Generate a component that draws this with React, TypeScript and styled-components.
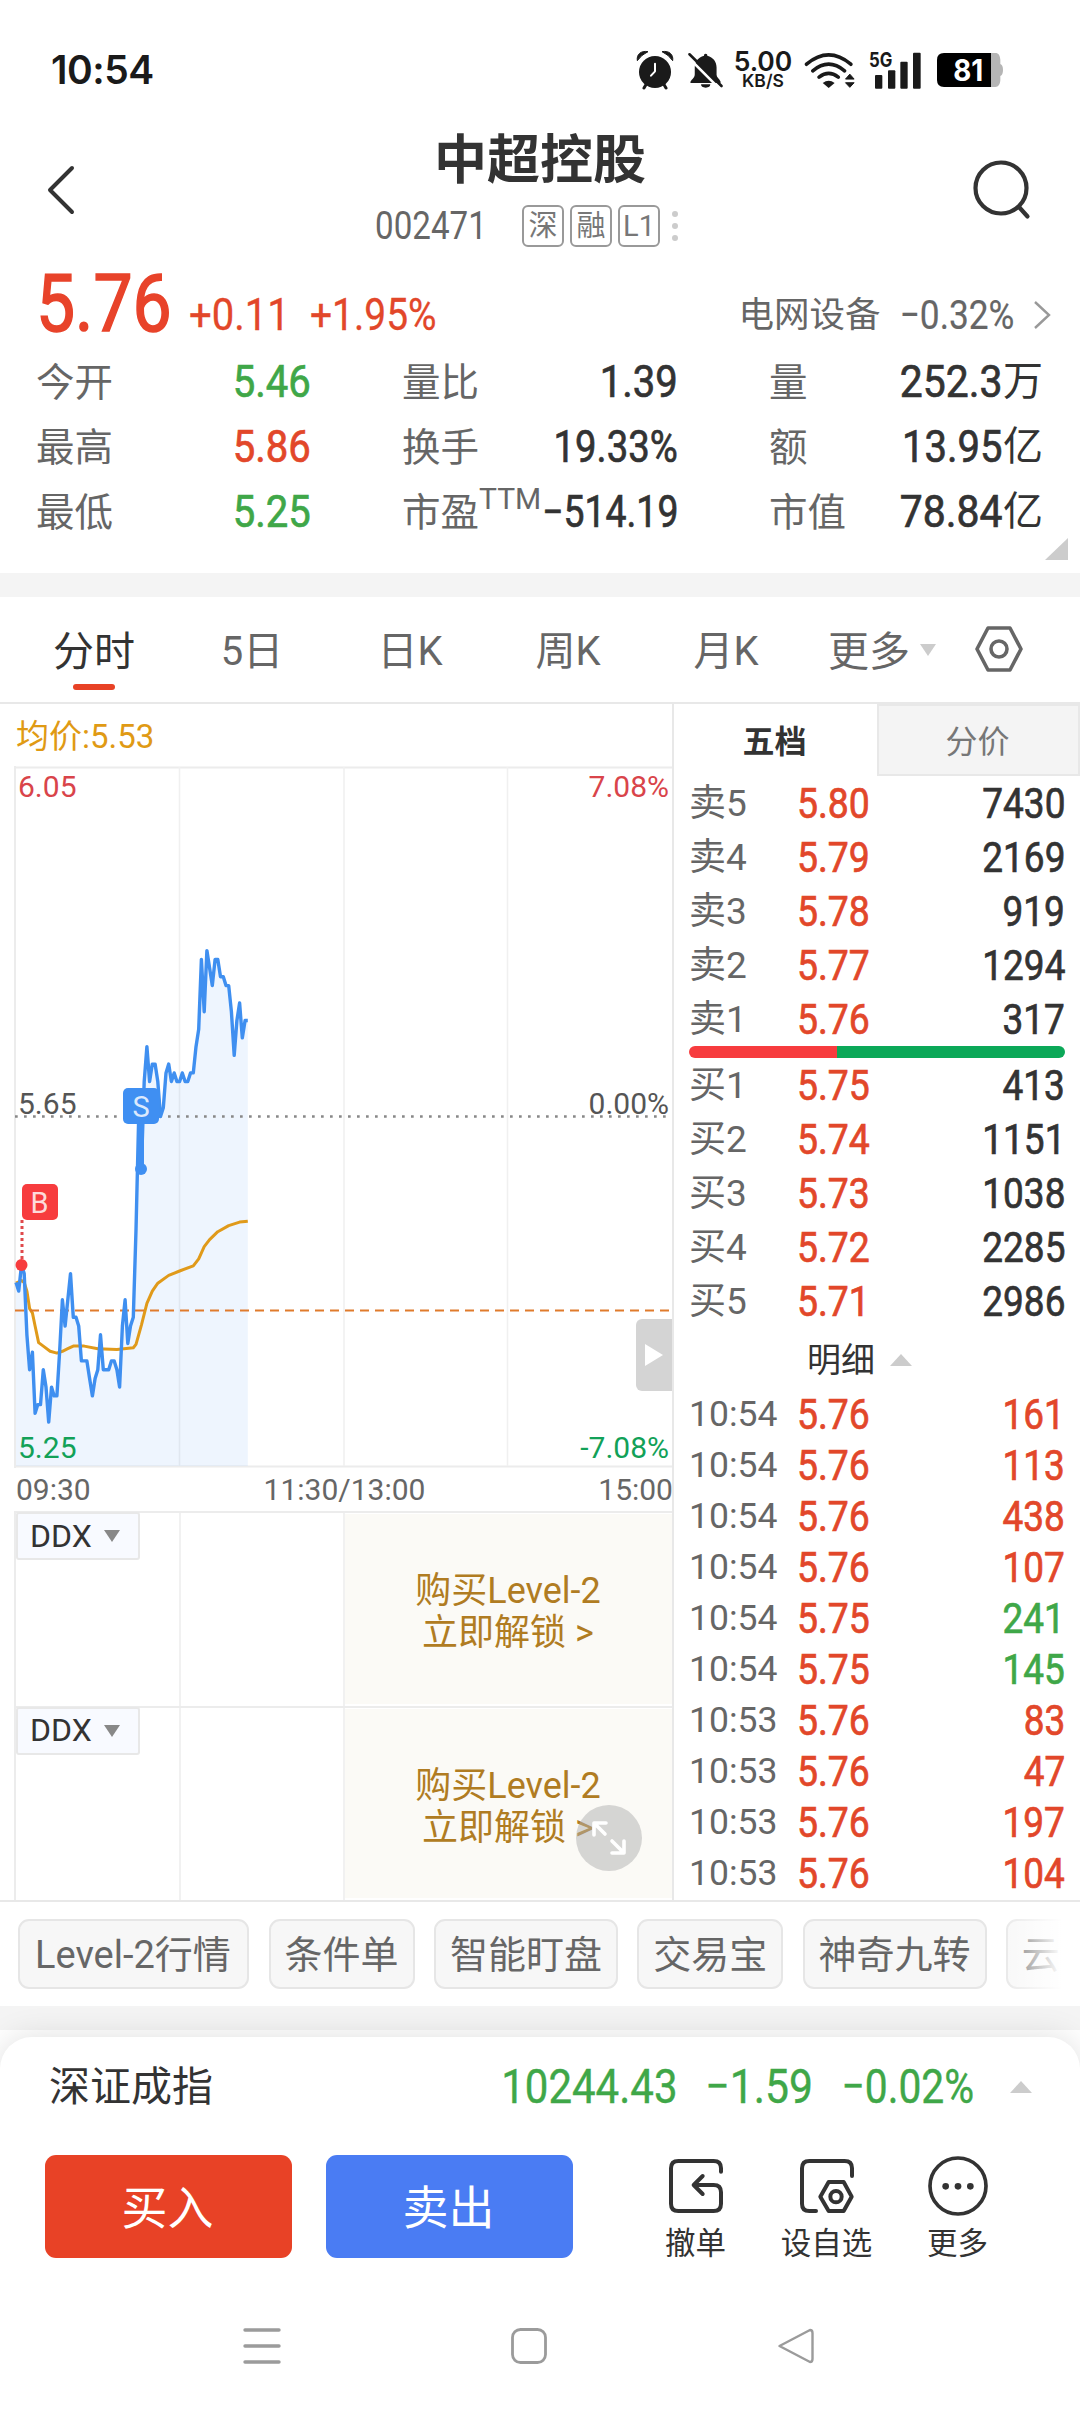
import React from "react";
import styled, { createGlobalStyle } from "styled-components";

const RED = "#e2472a";
const GREEN = "#3fa748";
const INK = "#333";
const GREY = "#666";
const LINE = "#e8e8e8";

const GlobalStyle = createGlobalStyle`
  * { box-sizing: border-box; }
  body {
    margin: 0;
    background: #fff;
    font-family: Roboto, "Noto Sans CJK SC", sans-serif;
    color: ${INK};
  }
`;

const Screen = styled.div`
  width: 1080px;
  height: 2412px;
  display: flex;
  flex-direction: column;
  background: #fff;
  overflow: hidden;
`;

/* Narrow figures used for every price and volume; $bold thickens the strokes */
const Num = styled.span<{
  $size?: number;
  $color?: string;
  $bold?: number;
  $narrow?: number;
  $from?: "left" | "right";
}>`
  display: inline-block;
  white-space: nowrap;
  font-size: ${(p) => p.$size ?? 43}px;
  font-weight: 400;
  color: ${(p) => p.$color ?? INK};
  -webkit-text-stroke: ${(p) => p.$bold ?? 0.7}px currentColor;
  transform: scaleX(${(p) => p.$narrow ?? 0.9});
  transform-origin: ${(p) => p.$from ?? "right"} center;
`;

/* ---------- status bar ---------- */

const StatusBar = styled.div`
  height: 128px;
  padding: 12px 77px 0 51px;
  display: flex;
  justify-content: space-between;
  align-items: center;
  font-family: Inter, sans-serif;
  color: #1a1a1a;
`;

const Clock = styled.span`
  margin-top: -2px;
  font-size: 39px;
  font-weight: 600;
  letter-spacing: -0.5px;
`;

const StatusIcons = styled.div`
  display: flex;
  align-items: center;
`;

const Speed = styled.div`
  width: 60px;
  margin: 1px 10px 0 9px;
  display: flex;
  flex-direction: column;
  align-items: center;
  font-weight: 600;
`;

const SpeedValue = styled.span`
  font-size: 26.5px;
  line-height: 21px;
`;

const SpeedUnit = styled.span`
  font-size: 17.5px;
  line-height: 18px;
`;

const SignalIcon = styled.svg`
  margin: -5px 0 0 12px;
`;

const BellIcon = styled.svg`
  margin-left: 13px;
`;

const BatteryIcon = styled.svg`
  margin-left: 15px;
`;

/* ---------- header ---------- */

const Header = styled.header`
  height: 124px;
  padding: 0 49px 0 44px;
  display: grid;
  grid-template-columns: 331px 330px 1fr;
  align-items: center;
`;

const SearchSlot = styled.div`
  display: flex;
  justify-content: flex-end;
`;

const Title = styled.h1`
  margin: 0;
  height: 66px;
  line-height: 67px;
  text-align: center;
  font-size: 53px;
  font-weight: 700;
`;

const CodeRow = styled.div`
  height: 58px;
  padding-top: 6px;
  display: flex;
  align-items: center;
`;

const CodeSlot = styled.div`
  width: 147px;
`;

const Badge = styled.span`
  width: 42px;
  height: 42px;
  margin-right: 6px;
  border: 2px solid #999;
  border-radius: 6px;
  display: flex;
  align-items: center;
  justify-content: center;
  font-size: 29px;
  line-height: 38px;
  color: #777;
`;

const Dots = styled.div`
  margin-left: 6px;
  display: flex;
  flex-direction: column;
  gap: 6px;
`;

const Dot = styled.i`
  width: 6px;
  height: 6px;
  border-radius: 50%;
  background: #ccc;
`;

/* ---------- quote ---------- */

const Quote = styled.section`
  height: 321px;
  padding-top: 12px;
`;

const PriceRow = styled.div`
  height: 85px;
  padding: 0 28px 0 36px;
  display: flex;
  align-items: flex-start;
`;

const BigPrice = styled.div`
  width: 153px;
  line-height: 80px;
`;

const Change = styled.div<{ $w?: number }>`
  width: ${(p) => (p.$w ? `${p.$w}px` : "auto")};
  padding-top: 21px;
  line-height: 60px;
`;

const Sector = styled.div`
  margin-left: auto;
  padding-top: 21px;
  display: flex;
  align-items: center;
  font-size: 35.5px;
  line-height: 60px;
  color: ${GREY};
`;

const SectorArrow = styled.svg`
  margin-left: 18px;
`;

const Stats = styled.div`
  padding: 0 37px 0 36px;
  display: grid;
  grid-template-columns: 275px 276px 274px;
  justify-content: space-between;
  grid-auto-rows: 65px;
`;

const Stat = styled.div`
  display: flex;
  justify-content: space-between;
  align-items: center;
  line-height: 60px;
`;

const StatLabel = styled.span`
  width: 0;
  padding-top: 2px;
  font-size: 38.5px;
  color: ${GREY};
  white-space: nowrap;
`;

const Raised = styled.span`
  display: inline-block;
  font-size: 30px;
  line-height: 20px;
  vertical-align: 17px;
`;

const StatValue = styled.span`
  display: flex;
  align-items: center;
  font-size: 40px;
`;

const Corner = styled.div`
  width: 0;
  height: 0;
  margin: -6px 12px 0 auto;
  border-left: 23px solid transparent;
  border-bottom: 22px solid #ccc;
`;

const Band = styled.div`
  flex: none;
  height: 24px;
  background: #f4f4f4;
`;

/* ---------- period tabs ---------- */

const PeriodTabs = styled.nav`
  height: 105px;
  padding-left: 15px;
  display: flex;
`;

const PeriodTab = styled.div<{ $active?: boolean }>`
  width: 158px;
  padding-top: 33px;
  display: flex;
  flex-direction: column;
  align-items: center;
  font-size: ${(p) => (p.$active ? 41 : 40)}px;
  line-height: 44px;
  color: ${(p) => (p.$active ? INK : GREY)};
`;

const Underline = styled.i`
  width: 42px;
  height: 6px;
  margin-top: 10px;
  border-radius: 3px;
  background: #e84226;
`;

const MoreTab = styled.div`
  width: 170px;
  padding: 33px 0 0 23px;
  display: flex;
  font-size: 41px;
  line-height: 44px;
  color: ${GREY};
`;

const Caret = styled.i<{ $w: number; $h: number; $up?: boolean; $color?: string }>`
  width: 0;
  height: 0;
  border-left: ${(p) => p.$w / 2}px solid transparent;
  border-right: ${(p) => p.$w / 2}px solid transparent;
  border-${(p) => (p.$up ? "bottom" : "top")}: ${(p) => p.$h}px solid ${(p) => p.$color ?? "#ccc"};
`;

const MoreCaret = styled(Caret)`
  margin: 14px 0 0 10px;
`;

const HexSlot = styled.div`
  padding-top: 28px;
`;

/* ---------- main area ---------- */

const Main = styled.main`
  height: 1200px;
  border-top: 2px solid ${LINE};
  border-bottom: 2px solid ${LINE};
  display: grid;
  grid-template-columns: 674px 406px;
`;

const ChartColumn = styled.section`
  position: relative;
  border-right: 2px solid ${LINE};
  display: flex;
  flex-direction: column;
`;

const Average = styled.div`
  height: 62px;
  padding: 12px 0 0 16px;
  font-size: 33px;
  line-height: 42px;
  color: #e09a14;
`;

const TimeAxis = styled.div`
  height: 43px;
  margin-right: -1px;
  padding-left: 16px;
  display: flex;
  justify-content: space-between;
  font-size: 30px;
  line-height: 43px;
  color: ${GREY};
`;

const SubPanel = styled.div`
  height: 194.5px;
  margin-left: 14px;
  border-top: 2px solid #ececec;
  border-left: 2px solid #ececec;
  display: grid;
  grid-template-columns: 164.500px 164.500px 327px;
`;

const SubCell = styled.div`
  border-right: 2px solid #f1f1f1;
`;

const IndicatorButton = styled.button`
  width: 124px;
  height: 48px;
  margin-top: -1px;
  padding: 0 0 0 12px;
  border: 2px solid ${LINE};
  border-radius: 3px;
  background: #f8faff;
  display: flex;
  align-items: center;
  gap: 12px;
  font: 400 32px/45px Roboto, sans-serif;
  color: ${INK};
`;

const Unlock = styled.div`
  margin: 1px 0 2px;
  padding: 56px 1px 0 0;
  background: #fbfaf6;
  text-align: center;
  font-size: 36px;
  line-height: 42px;
  color: #b07c22;
`;

const ExpandTab = styled.button`
  position: absolute;
  left: 636px;
  top: 615px;
  width: 36px;
  height: 72px;
  padding: 0;
  border: 0;
  border-radius: 6px 0 0 6px;
  background: #d4d4d4;
  display: flex;
  align-items: center;
  justify-content: center;
`;

const FullscreenButton = styled.button`
  position: absolute;
  left: 576px;
  top: 1101px;
  width: 66px;
  height: 66px;
  padding: 0;
  border: 0;
  border-radius: 50%;
  background: rgba(176, 176, 176, 0.5);
`;

/* ---------- order book ---------- */

const Book = styled.section`
  display: flex;
  flex-direction: column;
`;

const BookTabs = styled.div`
  height: 72px;
  display: grid;
  grid-template-columns: 203px 203px;
  grid-template-rows: 72px;
  text-align: center;
  font-size: 32px;
`;

const BookTab = styled.div<{ $active?: boolean }>`
  padding-right: 2px;
  line-height: ${(p) => (p.$active ? 76 : 73)}px;
  font-weight: ${(p) => (p.$active ? 700 : 400)};
  color: ${(p) => (p.$active ? INK : "#777")};
  background: ${(p) => (p.$active ? "#fff" : "#f4f4f4")};
  border: ${(p) => (p.$active ? "0" : `2px solid ${LINE}`)};
`;

const BookRow = styled.div<{ $h: number }>`
  height: ${(p) => p.$h}px;
  padding: 2px 15px 0 15px;
  display: grid;
  grid-template-columns: 108px 1fr auto;
  grid-template-rows: ${(p) => p.$h - 2}px;
  align-items: center;
  line-height: ${(p) => p.$h - 2}px;
`;

const Level = styled.span<{ $size: number }>`
  font-size: ${(p) => p.$size}px;
  color: ${GREY};
`;

const RatioBar = styled.div`
  height: 12px;
  margin: 0 15px;
  border-radius: 6px;
  background: linear-gradient(to right, #f73c3e 148px, #0ba858 148px);
`;

const DetailHead = styled.div`
  height: 60px;
  padding: 4px 0 0 133px;
  display: flex;
  align-items: center;
  gap: 15px;
  font-size: 34px;
  line-height: 56px;
`;

/* ---------- chips ---------- */

const Chips = styled.div`
  position: relative;
  height: 104px;
  padding: 17px 0 0 18px;
  display: flex;
  gap: 19.3px;
  width: 1062px;
  overflow: hidden;
`;

const Chip = styled.span<{ $pad?: string }>`
  flex: none;
  height: 70px;
  padding: ${(p) => p.$pad ?? "0 14px"};
  border: 2px solid #e6e6e6;
  border-radius: 11px;
  background: #f7f7f7;
  font-size: 38px;
  line-height: 69px;
  color: ${GREY};
  white-space: nowrap;
`;

const Fade = styled.div`
  position: absolute;
  right: 0;
  top: 0;
  width: 66px;
  height: 100%;
  background: linear-gradient(to right, rgba(255, 255, 255, 0), #fff);
`;

/* ---------- bottom sheet ---------- */

const Sheet = styled.footer`
  margin-top: 7px;
  height: 221px;
  flex: none;
  border-radius: 32px 32px 0 0;
  background: #fff;
  box-shadow: 0 0 32px rgba(0, 0, 0, 0.13);
  clip-path: inset(-40px 0 0 0);
`;

const IndexRow = styled.div`
  height: 98px;
  padding: 1px 49px 0 49px;
  display: grid;
  grid-template-columns: 1fr 136px 161px 57.5px;
  align-items: center;
  justify-items: end;
  line-height: 96px;
`;

const IndexName = styled.span`
  width: 628px;
  display: flex;
  justify-content: space-between;
  font-size: 41px;
`;

const Actions = styled.div`
  padding: 20px 0 0 45px;
  display: flex;
`;

const TradeButton = styled.button<{ $bg: string }>`
  width: 247px;
  height: 103px;
  margin-right: 34px;
  padding: 4px 2px 0 0;
  border: 0;
  border-radius: 11px;
  background: ${(p) => p.$bg};
  color: #fff;
  font: 400 46px/99px Roboto, "Noto Sans CJK SC", sans-serif;
`;

const Tools = styled.div`
  margin-left: 23px;
  display: flex;
`;

const Tool = styled.div`
  width: 131px;
  display: flex;
  flex-direction: column;
  align-items: center;
  font-size: 30.5px;
  line-height: 56px;
`;

const ToolIcon = styled.svg`
  margin-top: 1px;
`;

const SystemNav = styled.nav`
  flex: 1;
  padding: 22px 265px 0 243px;
  display: flex;
  justify-content: space-between;
  align-items: center;
`;

/* ---------- data ---------- */

const PRICES = [
  5.46, 5.45, 5.48, 5.47, 5.4, 5.36, 5.38, 5.31, 5.32, 5.32, 5.36, 5.34, 5.3, 5.34, 5.33, 5.33, 5.38,
  5.44, 5.41, 5.44, 5.47, 5.42, 5.42, 5.41, 5.37, 5.37, 5.37, 5.35, 5.33, 5.35, 5.36, 5.4, 5.36, 5.36,
  5.36, 5.37, 5.37, 5.36, 5.34, 5.41, 5.44, 5.39, 5.41, 5.42, 5.52, 5.65, 5.59, 5.69, 5.73, 5.69, 5.71,
  5.71, 5.69, 5.65, 5.66, 5.7, 5.71, 5.69, 5.7, 5.69, 5.69, 5.7, 5.69, 5.69, 5.7, 5.7, 5.73, 5.75, 5.83,
  5.77, 5.84, 5.82, 5.8, 5.83, 5.83, 5.81, 5.81, 5.8, 5.8, 5.77, 5.72, 5.76, 5.78, 5.74, 5.76, 5.76,
];

const AVERAGES: [number, number][] = [
  [0, 5.459], [2, 5.462], [3, 5.46], [4, 5.45], [5, 5.43], [6, 5.425], [7, 5.41], [8.3, 5.391], [10, 5.387],
  [12.5, 5.381], [15, 5.379], [17, 5.381], [19, 5.384], [21, 5.387], [25, 5.387], [30, 5.384], [37, 5.383],
  [43, 5.385], [44, 5.389], [46, 5.411], [48, 5.436], [50, 5.45], [52, 5.459], [56, 5.468], [60, 5.473],
  [65, 5.479], [67, 5.487], [69, 5.501], [71, 5.509], [74, 5.518], [78, 5.525], [82, 5.529], [85, 5.53],
];

const px = (minute: number) => 16 + minute * 2.727;
const py = (price: number) => 350.5 - (price - 5.65) * 873;
const toPath = (pts: [number, number][]) =>
  pts.map(([m, v], i) => `${i ? "L" : "M"}${px(m).toFixed(1)} ${py(v).toFixed(1)}`).join("");
const pricePath = toPath(PRICES.map((v, i) => [i, v] as [number, number]));

const STATS = [
  ["今开", "5.46", GREEN, "", 0.91],
  ["量比", "1.39", INK, "", 0.91],
  ["量", "252.3", INK, "万", 0.93],
  ["最高", "5.86", RED, "", 0.91],
  ["换手", "19.33%", INK, "", 0.87],
  ["额", "13.95", INK, "亿", 0.91],
  ["最低", "5.25", GREEN, "", 0.91],
  ["市盈", "−514.19", INK, "", 0.85],
  ["市值", "78.84", INK, "亿", 0.93],
] as const;

const SELLS = [["卖5", "5.80", "7430"], ["卖4", "5.79", "2169"], ["卖3", "5.78", "919"], ["卖2", "5.77", "1294"], ["卖1", "5.76", "317"]];
const BUYS = [["买1", "5.75", "413"], ["买2", "5.74", "1151"], ["买3", "5.73", "1038"], ["买4", "5.72", "2285"], ["买5", "5.71", "2986"]];
const TICKS = [
  ["10:54", "5.76", "161", RED], ["10:54", "5.76", "113", RED], ["10:54", "5.76", "438", RED],
  ["10:54", "5.76", "107", RED], ["10:54", "5.75", "241", GREEN], ["10:54", "5.75", "145", GREEN],
  ["10:53", "5.76", "83", RED], ["10:53", "5.76", "47", RED], ["10:53", "5.76", "197", RED], ["10:53", "5.76", "104", RED],
];

/* ---------- pieces ---------- */

function StatusIconSet() {
  return (
    <StatusIcons>
      <svg width="38" height="40" viewBox="46 60 114 120" fill="none">
        <circle cx="103" cy="126" r="48" fill="#1a1a1a" />
        <path d="M50 92C47 74 60 61 82 65Q62 74 50 92ZM156 92C159 74 146 61 124 65Q144 74 156 92Z" fill="#1a1a1a" stroke="#1a1a1a" strokeWidth="3" strokeLinejoin="round" />
        <path d="M77 162L70 174M129 162L136 174" stroke="#1a1a1a" strokeWidth="9" strokeLinecap="round" />
        <path d="M103 101V124L91 137" stroke="#fff" strokeWidth="6" strokeLinecap="round" strokeLinejoin="round" />
      </svg>
      <BellIcon width="37" height="38" viewBox="202 60 111 115" fill="none">
        <path d="M258 68c4 0 5 3 5 6 18 5 28 18 28 36v22c0 7 8 12 12 20v5H212v-3c0-6 13-12 13-24v-20c0-18 10-31 28-36 0-3 1-6 5-6z" fill="#1a1a1a" />
        <path d="M244 161h28a14 10 0 0 1-28 0z" fill="#1a1a1a" />
        <path d="M200 74L302 176" stroke="#fff" strokeWidth="8" />
        <path d="M209 70L306 166" stroke="#1a1a1a" strokeWidth="8" strokeLinecap="round" />
      </BellIcon>
      <Speed>
        <SpeedValue>5.00</SpeedValue>
        <SpeedUnit>KB/S</SpeedUnit>
      </Speed>
      <svg width="53" height="38" viewBox="550 60 159 115" fill="none">
        <path d="M560 100Q627 44 694 100M579 120Q627 80 675 120M598 139Q627 117 656 139" stroke="#1a1a1a" strokeWidth="11" strokeLinecap="round" />
        <path d="M627 172L609 157Q627 143 645 157Z" fill="#1a1a1a" />
        <path d="M678 145L691 130L704 145ZM678 156H704L691 170Z" fill="#1a1a1a" stroke="#1a1a1a" strokeWidth="3" strokeLinejoin="round" />
      </svg>
      <SignalIcon width="54" height="43" viewBox="744 46 162 129">
        <g fill="#1a1a1a">
          <rect x="765" y="133" width="22" height="41" rx="3" />
          <rect x="804" y="119" width="22" height="55" rx="3" />
          <rect x="841" y="93" width="22" height="81" rx="3" />
          <rect x="879" y="66" width="23" height="108" rx="3" />
          <text x="747" y="108" fontSize="60" fontWeight="700" textLength="70" lengthAdjust="spacingAndGlyphs">5G</text>
        </g>
      </SignalIcon>
      <BatteryIcon width="66" height="34" viewBox="951 72 198 102">
        <path d="M1100 72h26c10 0 14 8 15 20l0 13q8 3 8 18t-8 18l0 13c-1 12-5 20-15 20h-26z" fill="#b5b5b5" />
        <path d="M1113 72H972q-21 0-21 21v60q0 21 21 21h141z" fill="#000" />
        <text x="1045" y="156" fontSize="90" fontWeight="700" fill="#fff" textAnchor="middle" textLength="90" lengthAdjust="spacingAndGlyphs">81</text>
      </BatteryIcon>
    </StatusIcons>
  );
}

function PriceChart() {
  return (
    <svg width="672" height="702" viewBox="0 0 672 702" fill="none">
      <path d="M15 1.5H672M15 700.5H672M15 0V702" stroke="#ececec" strokeWidth="2" />
      <path d="M179.5 1V700M344 1V700M507.5 1V700" stroke="#f0f0f0" strokeWidth="1.6" />
      <path d={`${pricePath}V700H16Z`} fill="rgba(64,145,240,0.09)" />
      <path d="M15 350.5H672" stroke="#888" strokeWidth="2.6" strokeDasharray="2.7 6.3" />
      <path d={toPath(AVERAGES)} stroke="#e09a1a" strokeWidth="3" strokeLinejoin="round" />
      <path d="M15 544.5H672" stroke="#e07b2c" strokeWidth="2.2" strokeDasharray="9 6" />
      <path d={pricePath} stroke="#3f8ff0" strokeWidth="3.4" strokeLinejoin="round" />
      <path d="M141 356V402" stroke="#3f8ff2" strokeWidth="6" />
      <circle cx="141" cy="403" r="6" fill="#3f8ff2" />
      <rect x="123" y="322" width="36" height="36" rx="5" fill="#3f8ff2" />
      <text x="141" y="350.5" fontSize="29" fill="#dbe9fd" textAnchor="middle">S</text>
      <path d="M22 454V496" stroke="#e0494b" strokeWidth="3" strokeDasharray="3 3" />
      <circle cx="21.5" cy="499" r="6" fill="#f73c3e" />
      <rect x="22" y="418" width="36" height="36" rx="5" fill="#f73c3e" />
      <text x="39.5" y="447" fontSize="29" fill="#fddada" textAnchor="middle">B</text>
      <g fontSize="30">
        <text x="18" y="31" fill="#d9444a">6.05</text>
        <text x="669" y="31" fill="#d9444a" textAnchor="end">7.08%</text>
        <text x="18" y="348" fill="#555">5.65</text>
        <text x="669" y="348" fill="#555" textAnchor="end">0.00%</text>
        <text x="18" y="692" fill="#12a158">5.25</text>
        <text x="669" y="692" fill="#12a158" textAnchor="end">-7.08%</text>
      </g>
    </svg>
  );
}

function Indicator() {
  return (
    <SubPanel>
      <SubCell>
        <IndicatorButton>
          DDX
          <Caret $w={17} $h={12} $color="#888" />
        </IndicatorButton>
      </SubCell>
      <SubCell />
      <Unlock>
        购买Level-2
        <br />
        立即解锁 &gt;
      </Unlock>
    </SubPanel>
  );
}

function Depth({ rows }: { rows: string[][] }) {
  return (
    <>
      {rows.map(([label, price, qty]) => (
        <BookRow key={label} $h={54}>
          <Level $size={37}>{label}</Level>
          <Num $size={42} $color={RED} $from="left" $narrow={0.89}>{price}</Num>
          <Num $size={42} $narrow={0.88}>{qty}</Num>
        </BookRow>
      ))}
    </>
  );
}

export default function App() {
  return (
    <Screen>
      <GlobalStyle />
      <StatusBar>
        <Clock>10:54</Clock>
        <StatusIconSet />
      </StatusBar>

      <Header>
        <svg width="34" height="54" viewBox="0 0 34 54" fill="none">
          <path d="M28 5L6 27L28 49" stroke="#333" strokeWidth="4" strokeLinecap="round" strokeLinejoin="round" />
        </svg>
        <div>
          <Title>中超控股</Title>
          <CodeRow>
            <CodeSlot>
              <Num $size={39} $color={GREY} $bold={0} $from="left" $narrow={0.85}>002471</Num>
            </CodeSlot>
            <Badge>深</Badge>
            <Badge>融</Badge>
            <Badge>L1</Badge>
            <Dots><Dot /><Dot /><Dot /></Dots>
          </CodeRow>
        </div>
        <SearchSlot>
          <svg width="60" height="60" viewBox="0 0 60 60" fill="none" stroke="#333" strokeWidth="4.2" strokeLinecap="round">
            <circle cx="30" cy="28" r="25.5" />
            <path d="M48 47L56.500 56.500" />
          </svg>
        </SearchSlot>
      </Header>

      <Quote>
        <PriceRow>
          <BigPrice>
            <Num $size={80} $color="#e8432a" $bold={1.6} $from="left" $narrow={0.87}>5.76</Num>
          </BigPrice>
          <Change $w={121}>
            <Num $size={44} $color={RED} $bold={0.3} $from="left" $narrow={0.91}>+0.11</Num>
          </Change>
          <Change>
            <Num $size={44} $color={RED} $bold={0.3} $from="left" $narrow={0.885}>+1.95%</Num>
          </Change>
          <Sector>
            电网设备
            <Num $size={41} $color={GREY} $bold={0.2} $narrow={0.86}>−0.32%</Num>
            <SectorArrow width="20" height="30" viewBox="0 0 20 30" fill="none">
              <path d="M3 2L17 15L3 28" stroke="#999" strokeWidth="2.4" />
            </SectorArrow>
          </Sector>
        </PriceRow>
        <Stats>
          {STATS.map(([label, value, color, unit, narrow]) => (
            <Stat key={label}>
              <StatLabel>
                {label}
                {label === "市盈" && <Raised>TTM</Raised>}
              </StatLabel>
              <StatValue>
                <Num $size={44} $color={color} $narrow={narrow}>{value}</Num>
                {unit}
              </StatValue>
            </Stat>
          ))}
        </Stats>
        <Corner />
      </Quote>

      <Band />

      <PeriodTabs>
        <PeriodTab $active>分时<Underline /></PeriodTab>
        <PeriodTab>5日</PeriodTab>
        <PeriodTab>日K</PeriodTab>
        <PeriodTab>周K</PeriodTab>
        <PeriodTab>月K</PeriodTab>
        <MoreTab>更多<MoreCaret $w={16} $h={12} /></MoreTab>
        <HexSlot>
          <svg width="48" height="48" viewBox="0 0 48 48" fill="none" stroke="#666" strokeWidth="3.6" strokeLinejoin="round">
            <path d="M13 3H35L46 24L35 45H13L2 24Z" />
            <circle cx="24" cy="24" r="8" />
          </svg>
        </HexSlot>
      </PeriodTabs>

      <Main>
        <ChartColumn>
          <Average>均价:5.53</Average>
          <PriceChart />
          <TimeAxis>
            <span>09:30</span>
            <span>11:30/13:00</span>
            <span>15:00</span>
          </TimeAxis>
          <Indicator />
          <Indicator />
          <ExpandTab>
            <svg width="20" height="24" viewBox="0 0 20 24"><path d="M1 1L19 12L1 23Z" fill="#fff" /></svg>
          </ExpandTab>
          <FullscreenButton>
            <svg width="66" height="66" viewBox="0 0 66 66" fill="none" stroke="#fff" strokeWidth="3.6" strokeLinecap="round" strokeLinejoin="round">
              <path d="M18 30V18H30M19 19L29 29M48 36V48H36M47 47L36 36" />
            </svg>
          </FullscreenButton>
        </ChartColumn>

        <Book>
          <BookTabs>
            <BookTab $active>五档</BookTab>
            <BookTab>分价</BookTab>
          </BookTabs>
          <Depth rows={SELLS} />
          <RatioBar />
          <Depth rows={BUYS} />
          <DetailHead>
            明细
            <Caret $w={22} $h={12} $up />
          </DetailHead>
          {TICKS.map(([time, price, qty, color], i) => (
            <BookRow key={i} $h={51}>
              <Level $size={35.5}>{time}</Level>
              <Num $size={42} $color={RED} $from="left" $narrow={0.89}>{price}</Num>
              <Num $size={42} $color={color} $narrow={0.88}>{qty}</Num>
            </BookRow>
          ))}
        </Book>
      </Main>

      <Chips>
        <Chip $pad="0 16.500px 0 15px">Level-2行情</Chip>
        <Chip>条件单</Chip>
        <Chip>智能盯盘</Chip>
        <Chip>交易宝</Chip>
        <Chip>神奇九转</Chip>
        <Chip $pad="0 60px 0 14px">云</Chip>
        <Fade />
      </Chips>

      <Band />

      <Sheet>
        <IndexRow>
          <IndexName>
            深证成指
            <Num $size={48} $color={GREEN} $bold={0.4} $narrow={0.875}>10244.43</Num>
          </IndexName>
          <Num $size={48} $color={GREEN} $bold={0.4} $narrow={0.89}>−1.59</Num>
          <Num $size={48} $color={GREEN} $bold={0.4} $narrow={0.85}>−0.02%</Num>
          <Caret $w={22} $h={12} $up />
        </IndexRow>
        <Actions>
          <TradeButton $bg="#e84226">买入</TradeButton>
          <TradeButton $bg="#4a7cf3">卖出</TradeButton>
          <Tools>
            <Tool>
              <ToolIcon width="60" height="60" viewBox="195 78 180 180" fill="none" stroke="#333" strokeWidth="12" strokeLinecap="round" strokeLinejoin="round">
                <path d="M360 125V115Q360 93 338 93H232Q210 93 210 115V221Q210 243 232 243H338Q360 243 360 221V187Q360 165 338 165H280M305 138L278 165L305 192" />
              </ToolIcon>
              撤单
            </Tool>
            <Tool>
              <ToolIcon width="60" height="60" viewBox="588 78 180 180" fill="none" stroke="#333" strokeWidth="12" strokeLinecap="round" strokeLinejoin="round">
                <path d="M753 138V115Q753 93 731 93H625Q603 93 603 115V221Q603 243 625 243H645" />
                <path d="M683 156H728L752 200L728 243H683L658 200Z" />
                <circle cx="705" cy="200" r="17" />
              </ToolIcon>
              设自选
            </Tool>
            <Tool>
              <ToolIcon width="60" height="60" viewBox="984 78 180 180" fill="none">
                <circle cx="1074" cy="168" r="84" stroke="#333" strokeWidth="11" />
                <g fill="#333">
                  <circle cx="1037" cy="169" r="10" />
                  <circle cx="1074" cy="169" r="10" />
                  <circle cx="1111" cy="169" r="10" />
                </g>
              </ToolIcon>
              更多
            </Tool>
          </Tools>
        </Actions>
      </Sheet>

      <SystemNav>
        <svg width="38" height="38" viewBox="0 0 38 38" stroke="#9b9b9b" strokeWidth="3.400" strokeLinecap="round">
          <path d="M2 3H36M2 19H36M2 35H36" />
        </svg>
        <svg width="38" height="38" viewBox="0 0 38 38" fill="none" stroke="#9b9b9b" strokeWidth="2.800">
          <rect x="2.500" y="2.500" width="33" height="33" rx="8" />
        </svg>
        <svg width="38" height="38" viewBox="0 0 38 38" fill="none" stroke="#9b9b9b" strokeWidth="2.400" strokeLinejoin="round">
          <path d="M2.500 19L33 3Q35.500 3 35.500 6V32Q35.500 35 33 35Z" />
        </svg>
      </SystemNav>
    </Screen>
  );
}
